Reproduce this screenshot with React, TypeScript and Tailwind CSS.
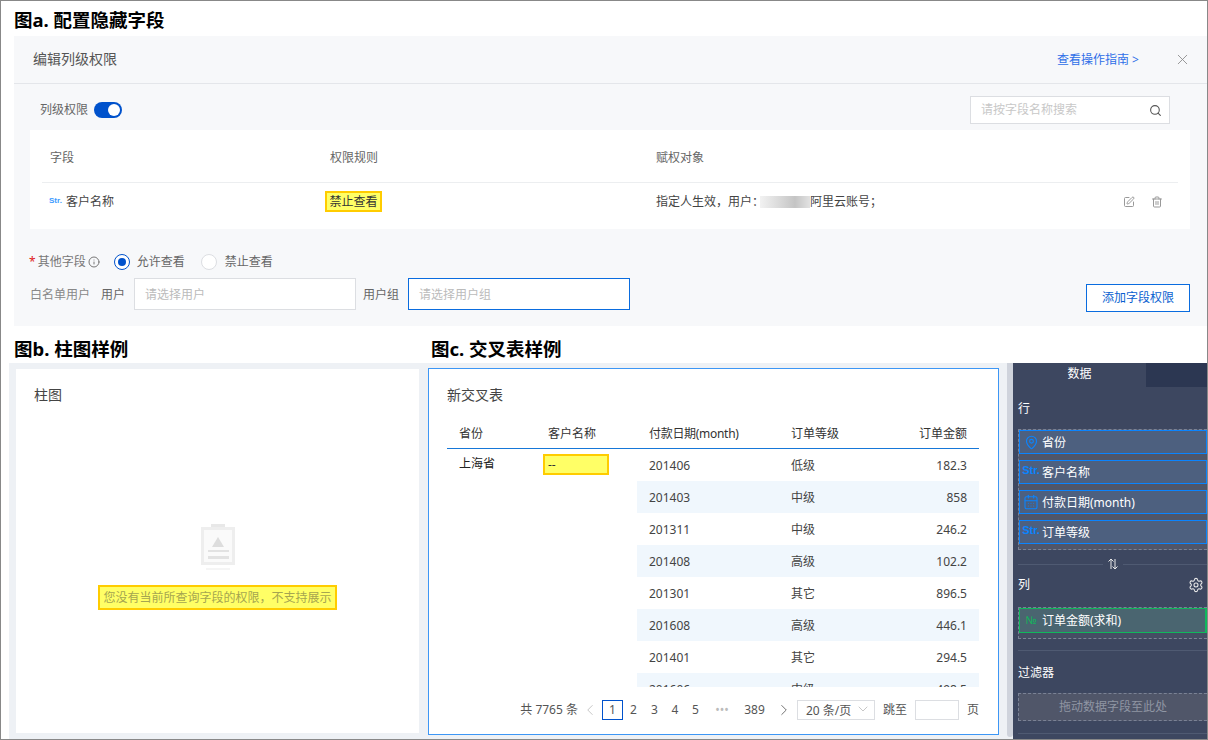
import { CalendarDays, ChevronDown, ChevronLeft, ChevronRight, Info, MapPin, Search, Settings, SquarePen, Trash2, X } from "lucide-react";

const font = { fontFamily: '"Noto Sans", "Noto Sans CJK SC", sans-serif' };

const rows = [
	["201406", "低级", "182.3"],
	["201403", "中级", "858"],
	["201311", "中级", "246.2"],
	["201408", "高级", "102.2"],
	["201301", "其它", "896.5"],
	["201608", "高级", "446.1"],
	["201401", "其它", "294.5"],
	["201606", "中级", "498.5"],
];

function Heading({ children }: { children: React.ReactNode }) {
	return <div className="text-[18.5px] leading-[24px] font-bold text-black">{children}</div>;
}

function FieldChip({ icon, label }: { icon: React.ReactNode; label: string }) {
	return (
		<div className="flex h-[24px] items-center border border-[#0a84ff] bg-[#4d607f] text-xs text-white">
			<div className="flex w-[22px] shrink-0 items-center justify-center">{icon}</div>
			<span className="pt-[1px]">{label}</span>
		</div>
	);
}

function StrIcon() {
	return <span className="-mt-1 text-[11px] font-bold text-[#0a84ff]" style={{ fontFamily: "Liberation Sans" }}>Str.</span>;
}

function Divider() {
	return <div className="h-px bg-[#4f5a72]" />;
}

function ConfigPanel() {
	return (
		<div className="ml-[13px] h-[290px] bg-[#f7f8fa]">
			<div className="flex h-[48px] items-center justify-between border-b border-[#e4e6ea] pr-[16px] pl-[19px]">
				<span className="-mt-[1px] text-sm text-[#555]">编辑列级权限</span>
				<div className="flex items-center gap-[35px]">
					<span className="text-xs text-[#2e6fe8]">查看操作指南 &gt;</span>
					<X size={17} strokeWidth={1.2} className="text-[#888]" />
				</div>
			</div>
			<div className="flex h-[46px] items-center justify-between pt-[6px] pr-[37px] pl-[26px]">
				<div className="flex items-center gap-[6px]">
					<span className="text-xs text-[#666]">列级权限</span>
					<div className="flex h-[16px] w-[28px] items-center justify-end rounded-full bg-[#0052cc] pr-[2px]">
						<div className="size-[12px] rounded-full bg-white" />
					</div>
				</div>
				<div className="flex h-[28px] w-[200px] items-center justify-between border border-[#dcdee2] bg-white pr-[7px] pl-[10px]">
					<span className="text-xs text-[#c8c8c8]">请按字段名称搜索</span>
					<Search size={13} className="text-[#555]" />
				</div>
			</div>
			<div className="mr-[17px] ml-[16px] h-[99px] bg-white px-[12px]">
				<div className="flex h-[53px] items-center border-b border-[#eceef0] pt-[3px] text-xs text-[#666]">
					<span className="ml-[8px] w-[280px]">字段</span>
					<span className="w-[326px]">权限规则</span>
					<span>赋权对象</span>
				</div>
				<div className="flex h-[46px] items-center pb-[9px] text-xs text-[#444]">
					<div className="ml-[7px] flex w-[276px] items-center gap-[4px]">
						<span className="text-[8px] font-bold text-[#3d9bff]" style={{ fontFamily: "Liberation Sans" }}>Str.</span>
						<span>客户名称</span>
					</div>
					<div className="w-[331px]">
						<span className="inline-block border-2 border-[#ffcc00] bg-[#ffff66] px-[2.5px] text-xs leading-[17px] text-[#333]">禁止查看</span>
					</div>
					<span>指定人生效，用户：</span>
					<div className="-ml-[4px] h-[12px] w-[50px] bg-[linear-gradient(90deg,#f2f2f2,#dcdcdc_35%,#c4c4c4_70%,#e2e2e2)]" />
					<span>阿里云账号；</span>
					<div className="ml-auto flex items-center gap-[16px] pr-[15px] text-[#999]">
						<SquarePen size={12} />
						<Trash2 size={12} />
					</div>
				</div>
			</div>
			<div className="mt-[25px] flex items-center pl-[15px] text-xs">
				<span className="mr-[2px] text-[#e02020]">*</span>
				<span className="text-[#777]">其他字段</span>
				<Info size={12} className="ml-[2px] text-[#777]" />
				<div className="ml-[14px] flex size-[16px] items-center justify-center rounded-full border border-[#0052cc] bg-white">
					<div className="size-[8px] rounded-full bg-[#0052cc]" />
				</div>
				<span className="ml-[7px] text-[#666]">允许查看</span>
				<div className="ml-[16px] size-[16px] rounded-full border border-[#dcdee2] bg-white" />
				<span className="ml-[8px] text-[#666]">禁止查看</span>
			</div>
			<div className="mt-[8px] flex items-start pr-[17px] pl-[16px] text-xs">
				<div className="flex items-center">
					<span className="pt-[1px] text-[#888]">白名单用户</span>
					<span className="ml-[11px] pt-[1px] text-[#666]">用户</span>
					<div className="ml-[9px] flex h-[32px] w-[222px] items-center border border-[#dcdee2] bg-white pt-[1px] pl-[10px] text-[#bbb]">请选择用户</div>
					<span className="ml-[7px] pt-[1px] text-[#666]">用户组</span>
					<div className="ml-[9px] flex h-[32px] w-[222px] items-center border border-[#0a6cdf] bg-white pt-[1px] pl-[10px] text-[#bbb]">请选择用户组</div>
				</div>
				<div className="mt-[6px] ml-auto flex h-[28px] w-[104px] items-center justify-center border border-[#0a6cdf] bg-white text-[#0a5fd0]">添加字段权限</div>
			</div>
		</div>
	);
}

function BarCard() {
	return (
		<div className="mt-[6px] ml-[7px] flex h-[364px] w-[403px] flex-col bg-white">
			<div className="mt-[16px] ml-[18px] text-sm text-[#444]">柱图</div>
			<div className="mt-[118px] flex flex-col items-center">
				<svg width="38" height="48" viewBox="0 0 38 48" fill="none">
					<rect x="12" y="1" width="14" height="5" fill="#e8e8e8" />
					<rect x="2" y="4" width="34" height="38" fill="#eeeeee" />
					<rect x="5" y="7" width="28" height="32" fill="#fafafa" />
					<path d="M19 14l6 10H13z" fill="#dddddd" />
					<rect x="9" y="27" width="21" height="2" fill="#e2e2e2" />
					<rect x="9" y="33" width="21" height="3" fill="#e2e2e2" />
					<rect x="7" y="45" width="24" height="2" fill="#f5f5f5" />
				</svg>
				<div className="mt-[14px] border-2 border-[#ffcc00] bg-[#ffff66] px-[3px] text-xs leading-[21px] text-[#a5a550]">您没有当前所查询字段的权限，不支持展示</div>
			</div>
		</div>
	);
}

function CrossTable() {
	return (
		<div className="mt-[5px] ml-[9px] flex h-[367px] w-[571px] flex-col border border-[#3d96f5] bg-white pr-[19px] pl-[18px] text-xs text-[#444]">
			<div className="mt-[16px] text-sm leading-[20px] text-[#444]">新交叉表</div>
			<div className="mt-[12px] flex h-[32px] items-center border-b border-[#1677d8] pt-[2px] text-[#333]">
				<span className="ml-[12px] w-[89px]">省份</span>
				<span className="w-[101px]">客户名称</span>
				<span className="w-[142px] tracking-[-0.3px]">付款日期(month)</span>
				<span>订单等级</span>
				<span className="mr-[12px] ml-auto">订单金额</span>
			</div>
			<div className="flex h-[238px] overflow-hidden">
				<div className="w-[190px] shrink-0">
					<div className="flex pt-[5px]">
						<span className="mt-[2px] ml-[12px] w-[84px] text-[#222]">上海省</span>
						<div className="flex h-[21px] w-[66px] items-center border-2 border-[#ffcc00] bg-[#ffff66] pl-[3px] text-[#333]">--</div>
					</div>
				</div>
				<div className="flex-1">
					{rows.map((r, i) => (
						<div key={r[0]} className={`flex h-[32px] items-center pt-[2px] ${i % 2 === 1 ? "bg-[#f0f7fd]" : "bg-white"}`}>
							<span className="ml-[12px] w-[142px]">{r[0]}</span>
							<span>{r[1]}</span>
							<span className="mr-[12px] ml-auto">{r[2]}</span>
						</div>
					))}
				</div>
			</div>
			<div className="mt-[12px] flex h-[22px] items-center justify-end text-[#555]">
				<span className="mr-[3px]">共 7765 条</span>
				<ChevronLeft size={18} strokeWidth={1} className="text-[#b4b4b4]" />
				<div className="ml-[3px] flex h-[20px] w-[21px] items-center justify-center border border-[#0052cc]">1</div>
				<span className="w-[21px] text-center">2</span>
				<span className="w-[21px] text-center">3</span>
				<span className="w-[20px] text-center">4</span>
				<span className="w-[21px] text-center">5</span>
				<span className="w-[32px] text-center text-[#bbb]">•••</span>
				<span className="w-[33px] text-center">389</span>
				<ChevronRight size={18} strokeWidth={1.1} className="mr-[4px] ml-[4px] text-[#555]" />
				<div className="flex h-[20px] w-[78px] items-center justify-between border border-[#dcdee2] pr-[3px] pl-[8px]">
					<span className="mt-[2px]">20 条/页</span>
					<ChevronDown size={16} strokeWidth={1} className="-mt-[3px] text-[#aaa]" />
				</div>
				<span className="ml-[8px]">跳至</span>
				<div className="ml-[8px] h-[20px] w-[44px] border border-[#dcdee2]" />
				<span className="ml-[8px]">页</span>
			</div>
		</div>
	);
}

function DataPanel() {
	return (
		<div className="flex h-[376px] w-[194px] flex-col bg-[#3d4760] text-xs text-white">
			<div className="flex h-[24px] shrink-0">
				<div className="flex w-[133px] items-center justify-center pb-[3px]">数据</div>
				<div className="flex-1 bg-[#2c3752]" />
			</div>
			<div className="mt-[12px] ml-[5px] leading-[20px]">行</div>
			<div className="mt-[10px] ml-[5px] flex h-[121px] shrink-0 flex-col gap-[6px] border border-dashed border-[#7a8295] border-r-0 bg-[#505669]">
				<FieldChip icon={<MapPin size={15} strokeWidth={1.8} className="text-[#0a84ff]" />} label="省份" />
				<FieldChip icon={<StrIcon />} label="客户名称" />
				<FieldChip icon={<CalendarDays size={16} strokeWidth={1.6} className="text-[#0a84ff]" />} label="付款日期(month)" />
				<FieldChip icon={<StrIcon />} label="订单等级" />
			</div>
			<div className="mt-[8px] ml-[5px] flex items-center">
				<div className="flex-1"><Divider /></div>
				<svg width="20" height="12" viewBox="0 0 20 12" fill="none" stroke="#e8e8e8" strokeWidth="1">
					<path d="M8 11V1M5.5 3.5L8 1l2.5 2.5M12 1v10M9.5 8.5L12 11l2.5-2.5" />
				</svg>
				<div className="flex-1"><Divider /></div>
			</div>
			<div className="mt-[5px] ml-[5px] flex items-center justify-between pr-[3px] leading-[20px]">
				<span>列</span>
				<Settings size={16} strokeWidth={1.6} className="text-[#e8e8e8]" />
			</div>
			<div className="mt-[12px] ml-[5px] h-[32px] shrink-0 border border-dashed border-[#7a8295] border-r-0 bg-[#454d63]">
				<div className="flex h-[25px] items-center border border-[#10b85c] border-r-2 bg-[#4a6570]">
					<div className="flex w-[22px] shrink-0 justify-center text-[11px] text-[#10b85c]">№</div>
					<span>订单金额(求和)</span>
				</div>
			</div>
			<div className="mt-[11px] ml-[5px]"><Divider /></div>
			<div className="mt-[12px] ml-[5px] leading-[20px]">过滤器</div>
			<div className="mt-[10px] ml-[5px] flex h-[28px] shrink-0 items-center justify-center border border-dashed border-[#7a8295] border-r-0 bg-[#505669] text-[#8f95a3]">拖动数据字段至此处</div>
			<div className="mt-[12px] ml-[5px]"><Divider /></div>
		</div>
	);
}

export default function App() {
	return (
		<div className="h-[740px] w-[1208px] overflow-hidden border border-[#888] bg-white" style={font}>
			<div className="ml-[13px] h-[35px] pt-[7px]">
				<Heading>图a. 配置隐藏字段</Heading>
			</div>
			<ConfigPanel />
			<div className="flex h-[37px] items-center pt-[8px] pl-[13px]">
				<div className="w-[417px]"><Heading>图b. 柱图样例</Heading></div>
				<Heading>图c. 交叉表样例</Heading>
			</div>
			<div className="flex">
				<div className="ml-[8px] flex h-[376px] w-[1004px] bg-[#eef1f5]">
					<BarCard />
					<CrossTable />
					<div className="ml-auto h-[374px] w-[6px] rounded-b bg-[#cfd3dc]" />
				</div>
				<DataPanel />
			</div>
		</div>
	);
}
